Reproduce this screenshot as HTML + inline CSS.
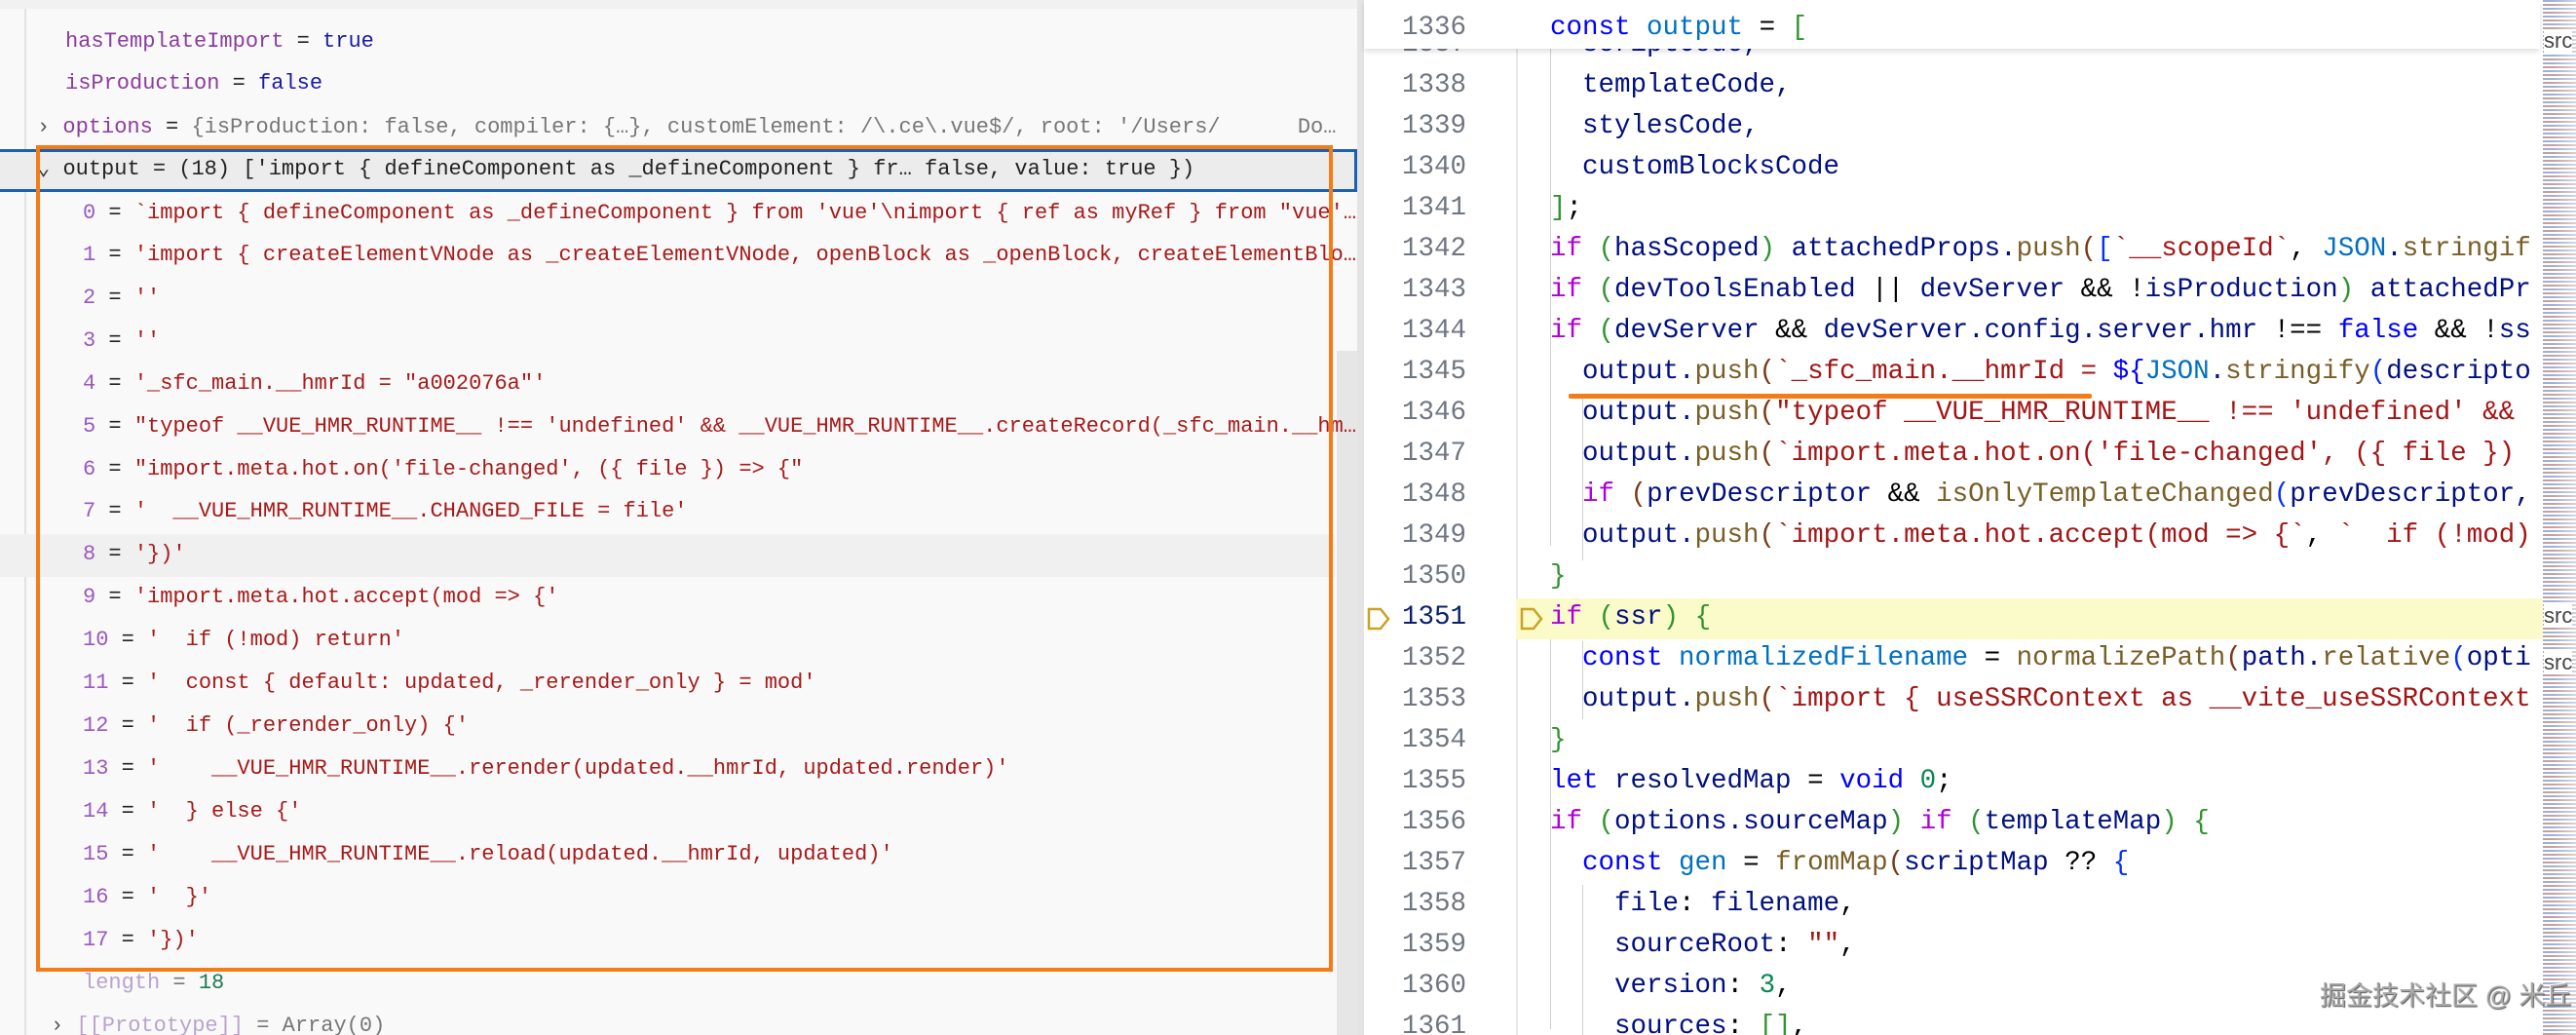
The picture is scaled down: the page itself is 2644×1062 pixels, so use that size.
<!DOCTYPE html>
<html><head><meta charset="utf-8"><style>
*{margin:0;padding:0;box-sizing:border-box}
body{width:2644px;height:1062px;overflow:hidden;background:#fff;position:relative;font-family:"Liberation Mono",monospace}
#left{position:absolute;left:0;top:0;width:1393px;height:1062px;background:#f9f9f9;overflow:hidden}
.l{position:absolute;left:0;height:44px;line-height:44px;font-size:22px;white-space:pre;color:#222}
.n{color:#8b3d9e}.i{color:#9a58c0}.s{color:#a61a1a}.b{color:#1a1aa6}.g{color:#777}.gr{color:#1c7c54}
#right{position:absolute;left:1393px;top:0;width:1251px;height:1062px;background:#fff;overflow:hidden}
.r{position:absolute;left:0;width:1220px;height:42px;line-height:42px;font-size:27.5px;white-space:pre}
.ln{position:absolute;left:0;width:112px;text-align:right;color:#6e7681}
.c{position:absolute;left:198px;color:#001080}
.k{color:#af00db}.kb{color:#0000ff}.f{color:#795e26}.st{color:#a31515}.nu{color:#098658}.v{color:#0070c1}.p1{color:#319331}.p2{color:#7b3814}.p3{color:#0431fa}.o{color:#000}.ty{color:#267f99}
</style></head><body>
<div id="left">
<div style="position:absolute;left:0;top:0;width:1393px;height:9px;background:#f1f1f1"></div>
<div style="position:absolute;left:25px;top:9px;width:2px;height:1053px;background:#e2e2e2"></div>
<div style="position:absolute;left:1372px;top:360px;width:21px;height:702px;background:#e6e6e6"></div>
<div style="position:absolute;left:0;top:548px;width:1370px;height:44px;background:#f0f0f0"></div>
<div style="position:absolute;left:0;top:153px;width:1393px;height:44px;background:#ececec;border-top:3px solid #1e5fb0;border-bottom:3px solid #1e5fb0;border-right:3px solid #1e5fb0"></div>
<div class="l" style="top:21px;left:67px"><span class="n">hasTemplateImport</span> = <span class="b">true</span></div>
<div class="l" style="top:64px;left:67px"><span class="n">isProduction</span> = <span class="b">false</span></div>
<div class="l" style="top:109px;left:38px"><span style="color:#555">› </span><span class="n">options</span> = <span class="g">{isProduction: false, compiler: {…}, customElement: /\.ce\.vue$/, root: '/Users/      Do…</span></div>
<div class="l" style="top:152px;left:38px"><span style="color:#333">⌄ </span>output = (18) ['import { defineComponent as _defineComponent } fr… false, value: true })</div>
<div class="l" style="top:197px;left:85px"><span class="i">0</span> = <span class="s">`import { defineComponent as _defineComponent } from 'vue'\nimport { ref as myRef } from "vue'…</span></div>
<div class="l" style="top:240px;left:85px"><span class="i">1</span> = <span class="s">'import { createElementVNode as _createElementVNode, openBlock as _openBlock, createElementBlo…</span></div>
<div class="l" style="top:284px;left:85px"><span class="i">2</span> = <span class="s">''</span></div>
<div class="l" style="top:328px;left:85px"><span class="i">3</span> = <span class="s">''</span></div>
<div class="l" style="top:372px;left:85px"><span class="i">4</span> = <span class="s">'_sfc_main.__hmrId = "a002076a"'</span></div>
<div class="l" style="top:416px;left:85px"><span class="i">5</span> = <span class="s">"typeof __VUE_HMR_RUNTIME__ !== 'undefined' &amp;&amp; __VUE_HMR_RUNTIME__.createRecord(_sfc_main.__hm…</span></div>
<div class="l" style="top:460px;left:85px"><span class="i">6</span> = <span class="s">"import.meta.hot.on('file-changed', ({ file }) =&gt; {"</span></div>
<div class="l" style="top:503px;left:85px"><span class="i">7</span> = <span class="s">'  __VUE_HMR_RUNTIME__.CHANGED_FILE = file'</span></div>
<div class="l" style="top:547px;left:85px"><span class="i">8</span> = <span class="s">'})'</span></div>
<div class="l" style="top:591px;left:85px"><span class="i">9</span> = <span class="s">'import.meta.hot.accept(mod =&gt; {'</span></div>
<div class="l" style="top:635px;left:85px"><span class="i">10</span> = <span class="s">'  if (!mod) return'</span></div>
<div class="l" style="top:679px;left:85px"><span class="i">11</span> = <span class="s">'  const { default: updated, _rerender_only } = mod'</span></div>
<div class="l" style="top:723px;left:85px"><span class="i">12</span> = <span class="s">'  if (_rerender_only) {'</span></div>
<div class="l" style="top:767px;left:85px"><span class="i">13</span> = <span class="s">'    __VUE_HMR_RUNTIME__.rerender(updated.__hmrId, updated.render)'</span></div>
<div class="l" style="top:811px;left:85px"><span class="i">14</span> = <span class="s">'  } else {'</span></div>
<div class="l" style="top:855px;left:85px"><span class="i">15</span> = <span class="s">'    __VUE_HMR_RUNTIME__.reload(updated.__hmrId, updated)'</span></div>
<div class="l" style="top:899px;left:85px"><span class="i">16</span> = <span class="s">'  }'</span></div>
<div class="l" style="top:943px;left:85px"><span class="i">17</span> = <span class="s">'})'</span></div>
<div class="l" style="top:987px;left:85px"><span style="color:#b9a3cc">length</span> <span class="g">=</span> <span class="gr">18</span></div>
<div class="l" style="top:1031px;left:52px"><span style="color:#555">› </span><span style="color:#b9a3cc">[[Prototype]]</span> <span class="g">= Array(0)</span></div>
<div style="position:absolute;left:37px;top:149px;width:1331px;height:848px;border:4px solid #f47b16"></div>
</div>
<div id="right">
<div style="position:absolute;left:0;top:0;width:7px;height:1062px;background:#e4e4e4"></div>
<div style="position:absolute;left:163px;top:0;width:2px;height:1062px;background:#e8e8e8"></div>
<div style="position:absolute;left:198px;top:50px;width:1px;height:510px;background:#d0d0d0"></div>
<div style="position:absolute;left:198px;top:656px;width:1px;height:400px;background:#d0d0d0"></div>
<div style="position:absolute;left:231px;top:405px;width:1px;height:170px;background:#d0d0d0"></div>
<div style="position:absolute;left:231px;top:615px;width:1px;height:40px;background:#d0d0d0"></div>
<div style="position:absolute;left:231px;top:658px;width:1px;height:80px;background:#d0d0d0"></div>
<div style="position:absolute;left:231px;top:908px;width:1px;height:154px;background:#d0d0d0"></div>
<div style="position:absolute;left:163px;top:614px;width:1055px;height:42px;background:#fbfbc9"></div>
<div class="r" style="top:25px"><span class="ln">1337</span><span class="c">  scriptCode,</span></div>
<div class="r" style="top:67px"><span class="ln">1338</span><span class="c">  templateCode,</span></div>
<div class="r" style="top:109px"><span class="ln">1339</span><span class="c">  stylesCode,</span></div>
<div class="r" style="top:151px"><span class="ln">1340</span><span class="c">  customBlocksCode</span></div>
<div class="r" style="top:193px"><span class="ln">1341</span><span class="c"><span class="p1">]</span><span class="o">;</span></span></div>
<div class="r" style="top:235px"><span class="ln">1342</span><span class="c"><span class="k">if</span> <span class="p1">(</span>hasScoped<span class="p1">)</span> attachedProps.<span class="f">push</span><span class="p2">(</span><span class="p3">[</span><span class="st">`__scopeId`</span><span class="o">, </span><span class="v">JSON</span>.<span class="f">stringif</span></span></div>
<div class="r" style="top:277px"><span class="ln">1343</span><span class="c"><span class="k">if</span> <span class="p1">(</span>devToolsEnabled <span class="o">||</span> devServer <span class="o">&amp;&amp; !</span>isProduction<span class="p1">)</span> attachedPr</span></div>
<div class="r" style="top:319px"><span class="ln">1344</span><span class="c"><span class="k">if</span> <span class="p1">(</span>devServer <span class="o">&amp;&amp;</span> devServer.config.server.hmr <span class="o">!==</span> <span class="kb">false</span> <span class="o">&amp;&amp; !</span>ss</span></div>
<div class="r" style="top:361px"><span class="ln">1345</span><span class="c">  output.<span class="f">push</span><span class="p2">(</span><span class="st">`_sfc_main.__hmrId = </span><span class="kb">${</span><span class="v">JSON</span>.<span class="f">stringify</span><span class="p3">(</span>descripto</span></div>
<div class="r" style="top:403px"><span class="ln">1346</span><span class="c">  output.<span class="f">push</span><span class="p2">(</span><span class="st">"typeof __VUE_HMR_RUNTIME__ !== 'undefined' &amp;&amp;</span></span></div>
<div class="r" style="top:445px"><span class="ln">1347</span><span class="c">  output.<span class="f">push</span><span class="p2">(</span><span class="st">`import.meta.hot.on('file-changed', ({ file })</span></span></div>
<div class="r" style="top:487px"><span class="ln">1348</span><span class="c">  <span class="k">if</span> <span class="p2">(</span>prevDescriptor <span class="o">&amp;&amp;</span> <span class="f">isOnlyTemplateChanged</span><span class="p3">(</span>prevDescriptor,</span></div>
<div class="r" style="top:529px"><span class="ln">1349</span><span class="c">  output.<span class="f">push</span><span class="p2">(</span><span class="st">`import.meta.hot.accept(mod =&gt; {`</span><span class="o">, </span><span class="st">`  if (!mod)</span></span></div>
<div class="r" style="top:571px"><span class="ln">1350</span><span class="c"><span class="p1">}</span></span></div>
<div class="r" style="top:613px"><span class="ln" style="color:#0b216f">1351</span><span class="c"><span class="k">if</span> <span class="p1">(</span>ssr<span class="p1">)</span> <span class="p1">{</span></span></div>
<div class="r" style="top:655px"><span class="ln">1352</span><span class="c">  <span class="kb">const</span> <span class="v">normalizedFilename</span> <span class="o">=</span> <span class="f">normalizePath</span><span class="p2">(</span>path.<span class="f">relative</span><span class="p3">(</span>opti</span></div>
<div class="r" style="top:697px"><span class="ln">1353</span><span class="c">  output.<span class="f">push</span><span class="p2">(</span><span class="st">`import { useSSRContext as __vite_useSSRContext</span></span></div>
<div class="r" style="top:739px"><span class="ln">1354</span><span class="c"><span class="p1">}</span></span></div>
<div class="r" style="top:781px"><span class="ln">1355</span><span class="c"><span class="kb">let</span> resolvedMap <span class="o">=</span> <span class="kb">void</span> <span class="nu">0</span><span class="o">;</span></span></div>
<div class="r" style="top:823px"><span class="ln">1356</span><span class="c"><span class="k">if</span> <span class="p1">(</span>options.sourceMap<span class="p1">)</span> <span class="k">if</span> <span class="p1">(</span>templateMap<span class="p1">)</span> <span class="p1">{</span></span></div>
<div class="r" style="top:865px"><span class="ln">1357</span><span class="c">  <span class="kb">const</span> <span class="v">gen</span> <span class="o">=</span> <span class="f">fromMap</span><span class="p2">(</span>scriptMap <span class="o">??</span> <span class="p3">{</span></span></div>
<div class="r" style="top:907px"><span class="ln">1358</span><span class="c">    file<span class="o">:</span> filename<span class="o">,</span></span></div>
<div class="r" style="top:949px"><span class="ln">1359</span><span class="c">    sourceRoot<span class="o">:</span> <span class="st">""</span><span class="o">,</span></span></div>
<div class="r" style="top:991px"><span class="ln">1360</span><span class="c">    version<span class="o">:</span> <span class="nu">3</span><span class="o">,</span></span></div>
<div class="r" style="top:1033px"><span class="ln">1361</span><span class="c">    sources<span class="o">:</span> <span class="p1">[]</span><span class="o">,</span></span></div>
<svg style="position:absolute;left:10px;top:622px" width="26" height="26"><path d="M2 3 H14 L22 13 L14 23 H2 Z" fill="none" stroke="#c9a227" stroke-width="2.5"/></svg>
<svg style="position:absolute;left:167px;top:622px" width="26" height="26"><path d="M2 3 H14 L22 13 L14 23 H2 Z" fill="none" stroke="#c9a227" stroke-width="2.5"/></svg>
<div style="position:absolute;left:217px;top:404px;width:537px;height:5px;background:#f47b16;border-radius:2px"></div>
<div style="position:absolute;left:7px;top:0;width:1207px;height:50px;background:#fff;box-shadow:0 3px 5px rgba(0,0,0,0.12)"></div>
<div class="r" style="top:8px;left:0"><span class="ln">1336</span><span class="c"><span class="kb">const</span> <span class="v">output</span> <span class="o">=</span> <span class="p1">[</span></span></div>
<div style="position:absolute;left:1217px;top:0;width:34px;height:1062px;background:repeating-linear-gradient(180deg,#9fb0d6 0 2px,#fff 2px 4px,#c4a0a0 4px 6px,#fff 6px 8px)"></div>
<div style="position:absolute;left:1217px;top:0;width:34px;height:1062px;background:linear-gradient(90deg,rgba(255,255,255,0) 30%,rgba(255,255,255,0.5))"></div>
<div style="position:absolute;left:1218px;top:30px;font-size:22px;color:#444;background:#fff;line-height:24px;font-family:'Liberation Sans',sans-serif">src</div>
<div style="position:absolute;left:1218px;top:620px;font-size:22px;color:#444;background:#fff;line-height:24px;font-family:'Liberation Sans',sans-serif">src</div>
<div style="position:absolute;left:1218px;top:668px;font-size:22px;color:#444;background:#fff;line-height:24px;font-family:'Liberation Sans',sans-serif">src</div>
<div style="position:absolute;left:988px;top:1005px;font-size:27px;line-height:34px;color:#a8a8a8;font-family:'Liberation Sans','Noto Sans CJK SC',sans-serif;text-shadow:1px 1px 1px #555,-1px -1px 0 #fff;white-space:nowrap">掘金技术社区 @ 米丘</div>
</div>
</body></html>
